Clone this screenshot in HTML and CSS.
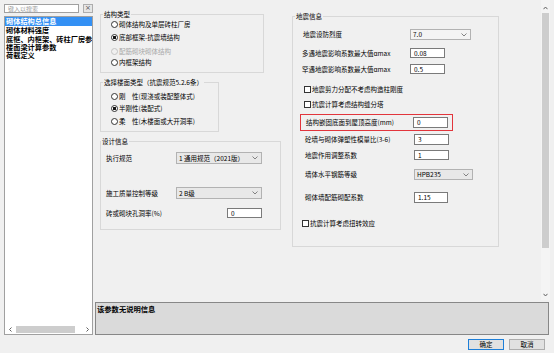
FILE: index.html
```html
<!DOCTYPE html>
<html lang="zh-CN">
<head>
<meta charset="utf-8">
<title>砌体结构参数</title>
<link rel="stylesheet" href="styles.css">
</head>
<body>
<div class="window">
  <aside class="sidebar">
    <div class="search-row">
      <div class="search">键入以搜索</div>
      <div class="clear">×</div>
    </div>
    <div class="tree">
      <ul class="items">
        <li class="item selected">砌体结构总信息</li>
        <li class="item">砌体材料强度</li>
        <li class="item">底框、内框架、砖柱厂房参数</li>
        <li class="item">楼面梁计算参数</li>
        <li class="item">荷载定义</li>
      </ul>
      <div class="hscroll">
        <svg class="arrow" width="5" height="5" viewBox="0 0 5 5"><polyline points="3.5,0.5 1.5,2.5 3.5,4.5" fill="none" stroke="#606060" stroke-width="1"/></svg>
        <div class="htrack"><div class="hthumb"></div></div>
        <svg class="arrow" width="5" height="5" viewBox="0 0 5 5"><polyline points="1.5,0.5 3.5,2.5 1.5,4.5" fill="none" stroke="#606060" stroke-width="1"/></svg>
      </div>
    </div>
  </aside>

  <main class="main">
    <div class="content">
      <div class="col-left">
        <fieldset class="group g1">
          <legend>结构类型</legend>
          <div class="rows radios">
            <div class="opt o1"><span class="radio"></span><span>砌体结构及单层砖柱厂房</span></div>
            <div class="opt o2"><span class="radio on"></span><span>底部框架-抗震墙结构</span></div>
            <div class="opt o3 disabled"><span class="radio"></span><span>配筋砌块砌体结构</span></div>
            <div class="opt o4"><span class="radio"></span><span>内框架结构</span></div>
          </div>
        </fieldset>

        <fieldset class="group g2">
          <legend>选择楼面类型（抗震规范5.2.6条）</legend>
          <div class="rows radios">
            <div class="opt p1"><span class="radio"></span><span>刚　性(现浇或装配整体式)</span></div>
            <div class="opt p2"><span class="radio on"></span><span>半刚性(装配式)</span></div>
            <div class="opt p3"><span class="radio"></span><span>柔　性(木楼面或大开洞率)</span></div>
          </div>
        </fieldset>

        <fieldset class="group g3">
          <legend>设计信息</legend>
          <div class="rows">
            <div class="field d1">
              <span class="lbl w70">执行规范</span>
              <div class="select w86"><span>1 通用规范（2021版）</span><svg class="chev" width="6" height="4" viewBox="0 0 6 4"><polyline points="0.5,0.5 3,3 5.5,0.5" fill="none" stroke="#666" stroke-width="0.8"/></svg></div>
            </div>
            <div class="field d2">
              <span class="lbl w70">施工质量控制等级</span>
              <div class="select w86"><span>2 B级</span><svg class="chev" width="6" height="4" viewBox="0 0 6 4"><polyline points="0.5,0.5 3,3 5.5,0.5" fill="none" stroke="#666" stroke-width="0.8"/></svg></div>
            </div>
            <div class="field d3">
              <span class="lbl w121">砖或砌块孔洞率(%)</span>
              <div class="input w35">0</div>
            </div>
          </div>
        </fieldset>
      </div>

      <fieldset class="group seis">
        <legend>地震信息</legend>
        <div class="rows">
          <div class="field s1">
            <span class="lbl w107">地震设防烈度</span>
            <div class="select light w61"><span>7.0</span><svg class="chev" width="6" height="4" viewBox="0 0 6 4"><polyline points="0.5,0.5 3,3 5.5,0.5" fill="none" stroke="#666" stroke-width="0.8"/></svg></div>
          </div>
          <div class="field s2">
            <span class="lbl w108">多遇地震影响系数最大值αmax</span>
            <div class="input w35">0.08</div>
          </div>
          <div class="field s3">
            <span class="lbl w108">罕遇地震影响系数最大值αmax</span>
            <div class="input w35">0.5</div>
          </div>
          <div class="check s4"><span class="box"></span><span>地震剪力分配不考虑构造柱刚度</span></div>
          <div class="check s5"><span class="box"></span><span>抗震计算考虑结构缝分塔</span></div>
          <div class="field highlight">
            <span class="lbl w107">结构嵌固底面到屋顶高度(mm)</span>
            <div class="input w35">0</div>
          </div>
          <div class="field s6">
            <span class="lbl w109">砼墙与砌体弹塑性模量比(3-6)</span>
            <div class="input w35">3</div>
          </div>
          <div class="field s7">
            <span class="lbl w109">地震作用调整系数</span>
            <div class="input w35">1</div>
          </div>
          <div class="field s8">
            <span class="lbl w109">墙体水平钢筋等级</span>
            <div class="select w59"><span>HPB235</span><svg class="chev" width="6" height="4" viewBox="0 0 6 4"><polyline points="0.5,0.5 3,3 5.5,0.5" fill="none" stroke="#666" stroke-width="0.8"/></svg></div>
          </div>
          <div class="field s9">
            <span class="lbl w109">砌体墙配筋砌配系数</span>
            <div class="input w34">1.15</div>
          </div>
          <div class="check s10"><span class="box"></span><span>抗震计算考虑扭转效应</span></div>
        </div>
      </fieldset>
    </div>

    <div class="vscroll">
      <div class="vbtn up"><svg width="5" height="4" viewBox="0 0 5 4"><polyline points="0.5,3.2 2.5,1 4.5,3.2" fill="none" stroke="#606060" stroke-width="1"/></svg></div>
      <div class="vthumb"></div>
      <div class="vbtn down"><svg width="5" height="4" viewBox="0 0 5 4"><polyline points="0.5,0.8 2.5,3 4.5,0.8" fill="none" stroke="#606060" stroke-width="1"/></svg></div>
    </div>
  </main>

  <div class="desc">该参数无说明信息</div>

  <div class="buttons">
    <div class="btn default">确定</div>
    <div class="btn">取消</div>
  </div>
</div>
</body>
</html>
```

FILE: styles.css
```css
* { box-sizing: border-box; }

body {
  margin: 0;
  width: 554px;
  height: 353px;
  overflow: hidden;
  background: #f0f0f0;
  font-family: "Noto Sans CJK SC", "Noto Sans", sans-serif;
  font-size: 6.5px;
  line-height: 1;
  color: #000;
}

.window {
  display: grid;
  grid-template-columns: 89px 459px;
  grid-template-rows: 300px 33px 16px;
  column-gap: 2px;
  row-gap: 2px;
  padding-left: 4px;
}

/* ---------- sidebar ---------- */
.sidebar {
  grid-row: 1 / 3;
  display: flex;
  flex-direction: column;
  padding-top: 4px;
}

.search-row {
  display: flex;
  gap: 4px;
  height: 9px;
}

.search {
  width: 75px;
  height: 9px;
  border: 1px solid #a0a0a0;
  background: #fff;
  color: #9a9a9a;
  font-size: 6px;
  line-height: 7px;
  padding-left: 3px;
}

.clear {
  width: 10px;
  height: 9px;
  border: 1px solid #adadad;
  background: #e6e6e6;
  color: #555;
  font-family: "DejaVu Sans", sans-serif;
  font-size: 7px;
  line-height: 7px;
  text-align: center;
}

.tree {
  margin-top: 3px;
  flex: 1;
  display: flex;
  flex-direction: column;
  border: 1px solid #a0a0a0;
  background: #fff;
}

.items {
  list-style: none;
  margin: 0;
  padding: 0;
  flex: 1;
  overflow: hidden;
}

.item {
  height: 8.3px;
  line-height: 8.3px;
  padding-left: 1px;
  font-size: 7.2px;
  font-weight: bold;
  white-space: nowrap;
}

.item.selected {
  height: 9.3px;
  line-height: 9.3px;
  background: #3390f4;
  color: #fff;
}

.hscroll {
  height: 9px;
  display: flex;
  align-items: center;
  padding: 0 2px 0 3px;
  gap: 3px;
}

.hscroll .arrow { flex: none; }

.htrack {
  flex: 1;
  height: 7px;
}

.hthumb {
  width: 59px;
  height: 7px;
  background: #cdcdcd;
}

/* ---------- main area ---------- */
.main {
  display: flex;
}

.content {
  width: 446px;
  display: flex;
  gap: 11px;
  padding-left: 5px;
}

.col-left {
  width: 181px;
  display: flex;
  flex-direction: column;
}

.group {
  margin: 0;
  padding: 0;
  border: 1px solid #d8d8d8;
  min-inline-size: 0;
}

.group legend {
  padding: 0 1px;
  margin-left: 2px;
  font-size: 6.5px;
  line-height: 8px;
  height: 8px;
}

.g1 { width: 164px; margin-top: 10px; }
.g2 { width: 119px; margin-top: 5px; }
.g3 { width: 181px; margin-top: 5px; }
.g3 legend { margin-left: 0; }

.seis {
  width: 207px;
  align-self: flex-start;
  margin-top: 12px;
}

.rows {
  display: flex;
  flex-direction: column;
}

.radios { padding-left: 10px; }
.g1 .rows { padding-bottom: 5px; }
.g2 .rows { padding-bottom: 5px; }
.g3 .rows { padding-left: 5px; padding-bottom: 11px; }
.seis .rows { padding-left: 10px; padding-bottom: 18px; }

.opt {
  height: 10px;
  display: flex;
  align-items: center;
  gap: 1px;
  white-space: nowrap;
}

.o1 { margin-top: 1px; }
.o2 { margin-top: 3px; }
.o3 { margin-top: 4px; }
.o4 { margin-top: 1px; }
.p1 { margin-top: 5px; }
.p2 { margin-top: 2px; }
.p3 { margin-top: 3px; }

.radio {
  flex: none;
  width: 7px;
  height: 7px;
  border: 1px solid #333;
  border-radius: 50%;
  background: #fff;
}

.radio.on {
  background: radial-gradient(circle, #111 0 1.4px, #fff 1.8px);
}

.opt.disabled { color: #a8a8a8; }
.opt.disabled .radio { border-color: #c4c4c4; background: transparent; }

.field {
  display: flex;
  align-items: center;
  white-space: nowrap;
}

.lbl { flex: none; }
.w70 { width: 70px; }
.w107 { width: 107px; }
.w108 { width: 108px; }
.w109 { width: 109px; }
.w121 { width: 121px; }

.select {
  flex: none;
  height: 100%;
  display: flex;
  align-items: center;
  justify-content: space-between;
  padding: 0 3px 0 2px;
  background: #e8e8e8;
  border: 1px solid #b2b2b2;
}

.select.light { background: #f4f4f4; }

.input {
  flex: none;
  height: 100%;
  display: flex;
  align-items: center;
  padding-left: 3px;
  background: #fff;
  border: 1px solid #7a7a7a;
}

.w86 { width: 86px; }
.w61 { width: 61px; }
.w59 { width: 59px; }
.w35 { width: 35px; }
.w34 { width: 34px; }

.d1 { margin-top: 7px; height: 12px; }
.d2 { margin-top: 23px; height: 12px; }
.d3 { margin-top: 9px; height: 10px; }

.s1 { margin-top: 9px; height: 11px; }
.s2 { margin-top: 8px; height: 10px; margin-left: -1px; }
.s3 { margin-top: 6px; height: 10px; margin-left: -1px; }

.check {
  height: 10px;
  display: flex;
  align-items: center;
  gap: 1px;
  white-space: nowrap;
}

.box {
  flex: none;
  width: 7px;
  height: 7px;
  border: 1px solid #333;
  background: #fff;
}

.s4 { margin-top: 10px; padding-left: 1px; }
.s5 { margin-top: 5px; padding-left: 1px; }

.highlight {
  margin-top: 5px;
  margin-left: -3px;
  width: 153px;
  height: 17px;
  padding: 2px 0 2px 5px;
  border: 1px solid #e2353c;
}

.highlight .input { height: 11px; }

.s6 { margin-top: 3px; height: 11px; padding-left: 2px; }
.s7 { margin-top: 5px; height: 10px; padding-left: 2px; }
.s8 { margin-top: 9px; height: 11px; padding-left: 2px; }
.s9 { margin-top: 12px; height: 11px; padding-left: 2px; }
.s10 { margin-top: 15px; margin-left: -1px; }

/* ---------- vertical scrollbar ---------- */
.vscroll {
  width: 9px;
  height: 300px;
  display: flex;
  flex-direction: column;
  align-items: center;
  background: #f4f4f4;
}

.vbtn {
  height: 13px;
  display: flex;
  align-items: center;
  justify-content: center;
}

.vbtn.up { padding-top: 2px; }

.vthumb {
  width: 7px;
  height: 235px;
  background: #cdcdcd;
}

.vbtn.down {
  margin-top: auto;
  height: 10px;
}

/* ---------- description ---------- */
.desc {
  grid-column: 2;
  margin-right: 5px;
  border: 1px solid #878787;
  background: #dadada;
  padding: 2px 1px;
  font-size: 7.3px;
  font-weight: bold;
  line-height: 9px;
}

/* ---------- buttons ---------- */
.buttons {
  grid-column: 2;
  display: flex;
  justify-content: flex-end;
  gap: 5px;
  padding-right: 9px;
  padding-top: 2px;
}

.btn {
  width: 36px;
  height: 11px;
  border: 1px solid #adadad;
  background: #e1e1e1;
  font-size: 6.5px;
  line-height: 9px;
  text-align: center;
}

.btn.default {
  border-color: #1e7fd8;
}
```
